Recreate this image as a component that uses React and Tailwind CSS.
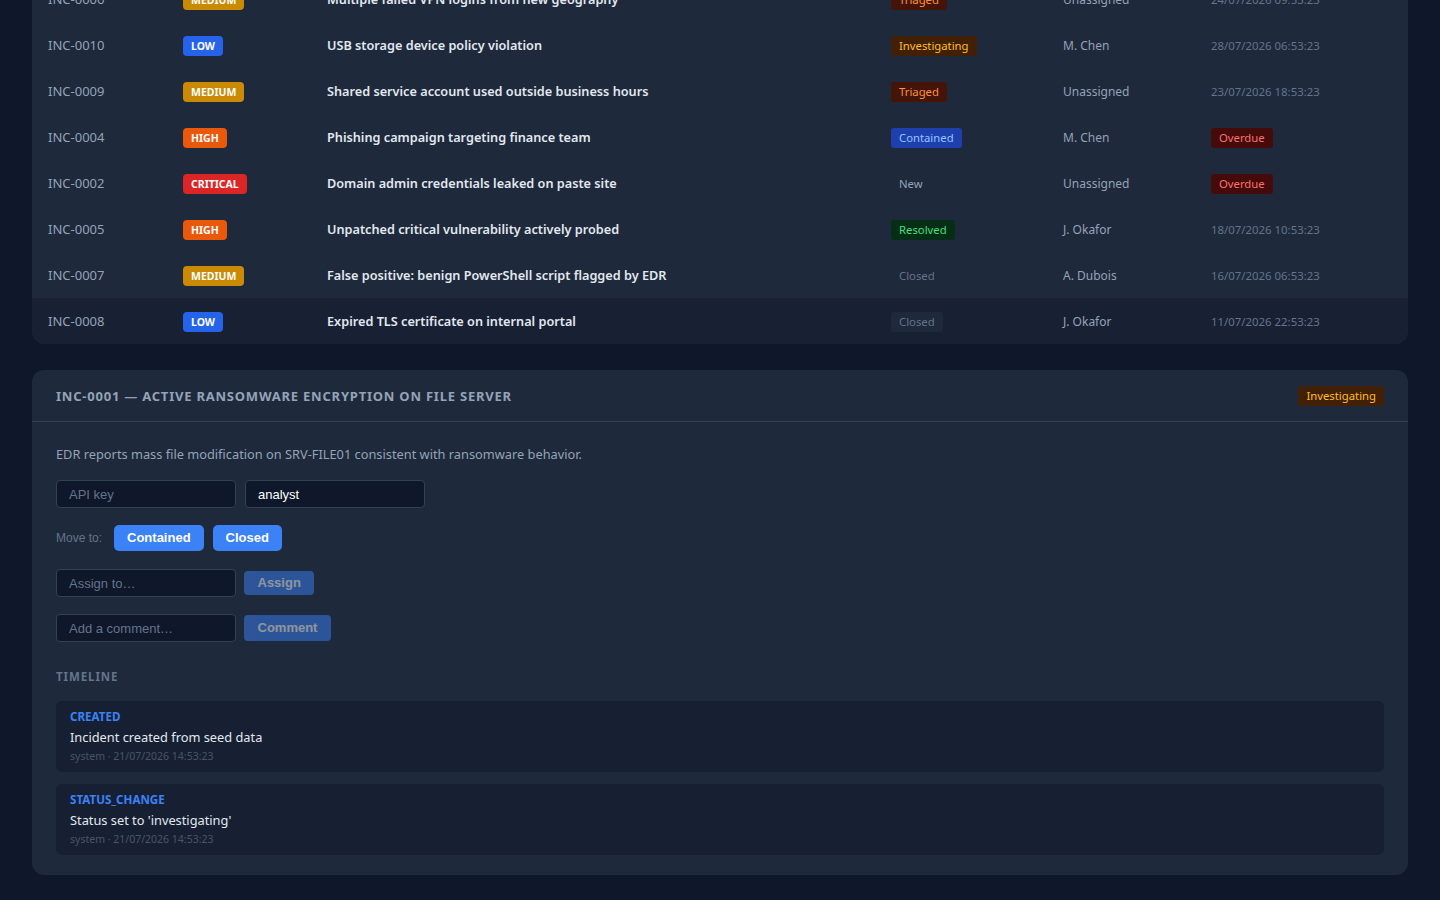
import React from "react";

const rows = [
  { id: "INC-0006", sev: "MEDIUM", title: "Multiple failed VPN logins from new geography", status: "Triaged", who: "Unassigned", sla: "24/07/2026 09:53:23" },
  { id: "INC-0010", sev: "LOW", title: "USB storage device policy violation", status: "Investigating", who: "M. Chen", sla: "28/07/2026 06:53:23" },
  { id: "INC-0009", sev: "MEDIUM", title: "Shared service account used outside business hours", status: "Triaged", who: "Unassigned", sla: "23/07/2026 18:53:23" },
  { id: "INC-0004", sev: "HIGH", title: "Phishing campaign targeting finance team", status: "Contained", who: "M. Chen", sla: "OVERDUE" },
  { id: "INC-0002", sev: "CRITICAL", title: "Domain admin credentials leaked on paste site", status: "New", who: "Unassigned", sla: "OVERDUE" },
  { id: "INC-0005", sev: "HIGH", title: "Unpatched critical vulnerability actively probed", status: "Resolved", who: "J. Okafor", sla: "18/07/2026 10:53:23" },
  { id: "INC-0007", sev: "MEDIUM", title: "False positive: benign PowerShell script flagged by EDR", status: "Closed", who: "A. Dubois", sla: "16/07/2026 06:53:23" },
  { id: "INC-0008", sev: "LOW", title: "Expired TLS certificate on internal portal", status: "Closed", who: "J. Okafor", sla: "11/07/2026 22:53:23", hover: true },
];

const sevCls = {
  LOW: "bg-[#2563eb]",
  MEDIUM: "bg-[#ca8a04]",
  HIGH: "bg-[#ea580c]",
  CRITICAL: "bg-[#dc2626]",
};

const statusCls = {
  Triaged: "bg-[#431407] text-[#fb923c]",
  Investigating: "bg-[#422006] text-[#fbbf24]",
  Contained: "bg-[#1e40af] text-[#93c5fd]",
  New: "text-[#94a3b8]",
  Resolved: "bg-[#052e16] text-[#4ade80]",
  Closed: "bg-[#1e293b] text-[#64748b]",
};

const font = { fontFamily: '"Noto Sans", "Open Sans", sans-serif' };

function Sev({ s }) {
  return (
    <span className={`inline-flex h-[20px] items-center rounded-[4px] px-[8px] text-[10.5px] font-bold leading-none text-white ${sevCls[s]}`}>
      {s}
    </span>
  );
}

function Status({ s }) {
  return (
    <span className={`inline-flex h-[20px] items-center rounded-[3px] px-[8px] text-[11.3px] leading-none ${statusCls[s]}`}>
      {s}
    </span>
  );
}

function Row({ r }) {
  return (
    <div
      className={`grid h-[46px] grid-cols-[135px_144px_564px_172px_148px_1fr] items-center ${r.hover ? "bg-[#0f172a]/40" : ""}`}
    >
      <div className="pl-4 pt-[2px] text-[13px] text-[#94a3b8]">{r.id}</div>
      <div className="flex items-center pl-4 pt-[2px]"><Sev s={r.sev} /></div>
      <div className="pl-4 pt-[2px] text-[12.7px] font-semibold text-[#e2e8f0]">{r.title}</div>
      <div className="flex items-center pl-4 pt-[2px]"><Status s={r.status} /></div>
      <div className="pl-4 pt-[1px] text-[12px] text-[#94a3b8]">{r.who}</div>
      <div className="flex items-center pl-4 pt-[2px]">
        {r.sla === "OVERDUE" ? (
          <span className="inline-flex h-[20px] items-center rounded-[3px] bg-[#450a0a] px-[8px] text-[11.3px] leading-none text-[#f87171]">
            Overdue
          </span>
        ) : (
          <span className="text-[11.4px] text-[#64748b]">{r.sla}</span>
        )}
      </div>
    </div>
  );
}

const formFont = { fontFamily: '"Liberation Sans", Arial, sans-serif' };

function Input({ placeholder, value }) {
  return (
    <input
      readOnly
      placeholder={placeholder}
      value={value || ""}
      style={formFont}
      className="h-[28px] w-[180px] rounded-[4px] border border-[#334155] bg-[#0f172a] px-[12px] text-[13px] text-white outline-none placeholder:text-[#64748b]"
    />
  );
}

function TimelineItem({ type, msg, meta }) {
  return (
    <div className="rounded-[6px] bg-[#0f172a]/50 px-[14px] pb-[9px] pt-[9px]">
      <div className="text-[11.6px] font-bold leading-[14px] text-[#3b82f6]">{type}</div>
      <div className="mt-[3px] text-[12.8px] leading-[20px] text-[#e2e8f0]">{msg}</div>
      <div className="mt-[2px] text-[10.5px] leading-[14px] text-[#475569]">{meta}</div>
    </div>
  );
}

export default function App() {
  return (
    <div style={font} className="min-h-screen overflow-hidden bg-[#0f172a] px-8 pb-6">
      <div className="-mt-[24px] overflow-hidden rounded-b-xl bg-[#1e293b]">
        {rows.map((r) => (
          <Row key={r.id} r={r} />
        ))}
      </div>

      <div className="mt-[26px] rounded-xl bg-[#1e293b]">
        <div className="flex h-[52px] items-center justify-between border-b border-[#334155] px-6">
          <div className="pt-[2px] text-[13px] font-bold uppercase tracking-[0.06em] text-[#94a3b8]">
            INC-0001 — Active ransomware encryption on file server
          </div>
          <Status s="Investigating" />
        </div>
        <div className="px-6 pb-5 pt-6">
          <div className="text-[12.8px] leading-[16px] text-[#94a3b8]">
            EDR reports mass file modification on SRV-FILE01 consistent with ransomware behavior.
          </div>
          <div className="mt-[18px] flex items-center gap-[9px]">
            <Input placeholder="API key" />
            <Input placeholder="" value="analyst" />
          </div>
          <div className="mt-[17px] flex h-[26px] items-center gap-[9px]" style={formFont}>
            <span className="mr-[3px] text-[12px] text-[#64748b]">Move to:</span>
            <button className="h-[26px] rounded-[5px] bg-[#3b82f6] px-[13px] text-[13px] font-bold text-white">Contained</button>
            <button className="h-[26px] rounded-[5px] bg-[#3b82f6] px-[13px] text-[13px] font-bold text-white">Closed</button>
          </div>
          <div className="mt-[18px] flex items-center gap-[8px]" style={formFont}>
            <Input placeholder="Assign to…" />
            <button disabled className="h-[24px] rounded-[4px] bg-[#3b82f6] px-[13.5px] text-[13px] font-bold text-white opacity-50">Assign</button>
          </div>
          <div className="mt-[17px] flex items-center gap-[8px]" style={formFont}>
            <Input placeholder="Add a comment…" />
            <button disabled className="h-[26px] rounded-[4px] bg-[#3b82f6] px-[13.5px] text-[13px] font-bold text-white opacity-50">Comment</button>
          </div>

          <div className="mt-[27px] text-[11.5px] font-bold uppercase leading-[16px] tracking-[0.08em] text-[#64748b]">Timeline</div>
          <div className="mt-[16px] flex flex-col gap-[12px]">
            <TimelineItem type="CREATED" msg="Incident created from seed data" meta="system · 21/07/2026 14:53:23" />
            <TimelineItem type="STATUS_CHANGE" msg="Status set to 'investigating'" meta="system · 21/07/2026 14:53:23" />
          </div>
        </div>
      </div>
    </div>
  );
}
